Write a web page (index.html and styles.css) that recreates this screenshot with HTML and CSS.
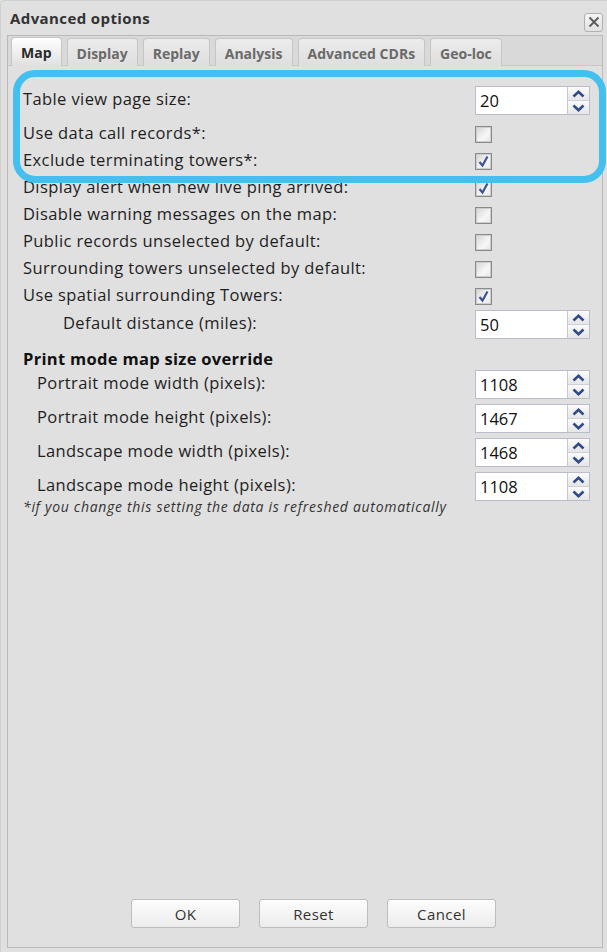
FILE: index.html
```html
<!DOCTYPE html>
<html lang="en">
<head>
<meta charset="utf-8">
<title>Advanced options</title>
<link rel="stylesheet" href="styles.css">
</head>
<body>
<div class="window">
  <div class="titlebar">
    <span class="title">Advanced options</span>
    <span class="close" aria-label="Close">
      <svg width="12" height="12" viewBox="0 0 12 12"><path d="M1.5 1.5 L10.5 10.5 M10.5 1.5 L1.5 10.5" stroke="#5a5a5a" stroke-width="1.8" fill="none"/></svg>
    </span>
  </div>
  <div class="panel">
    <div class="tabbar">
      <span class="tab active">Map</span>
      <span class="tab">Display</span>
      <span class="tab">Replay</span>
      <span class="tab">Analysis</span>
      <span class="tab">Advanced CDRs</span>
      <span class="tab">Geo-loc</span>
    </div>
    <div class="content">
      <div class="form">
        <div class="row spin-row first">
          <span class="label">Table view page size:</span>
          <span class="spinner"><span class="value">20</span><span class="arrows"><span class="arrow"><svg width="13" height="8" viewBox="0 0 13 8"><path d="M1.5 6.5 L6.5 1.8 L11.5 6.5" stroke="#2f4b8a" stroke-width="2.6" fill="none"/></svg></span><span class="arrow"><svg width="13" height="8" viewBox="0 0 13 8"><path d="M1.5 1.5 L6.5 6.2 L11.5 1.5" stroke="#2f4b8a" stroke-width="2.6" fill="none"/></svg></span></span></span>
        </div>
        <div class="row check-row">
          <span class="label">Use data call records*:</span>
          <span class="checkbox"></span>
        </div>
        <div class="row check-row">
          <span class="label">Exclude terminating towers*:</span>
          <span class="checkbox checked"><svg width="13" height="13" viewBox="0 0 13 13"><path d="M2.5 7 L5.5 10.5 L10.5 1.5" stroke="#3d5596" stroke-width="2.2" fill="none"/></svg></span>
        </div>
        <div class="row check-row">
          <span class="label">Display alert when new live ping arrived:</span>
          <span class="checkbox checked"><svg width="13" height="13" viewBox="0 0 13 13"><path d="M2.5 7 L5.5 10.5 L10.5 1.5" stroke="#3d5596" stroke-width="2.2" fill="none"/></svg></span>
        </div>
        <div class="row check-row">
          <span class="label">Disable warning messages on the map:</span>
          <span class="checkbox"></span>
        </div>
        <div class="row check-row">
          <span class="label">Public records unselected by default:</span>
          <span class="checkbox"></span>
        </div>
        <div class="row check-row">
          <span class="label">Surrounding towers unselected by default:</span>
          <span class="checkbox"></span>
        </div>
        <div class="row check-row">
          <span class="label">Use spatial surrounding Towers:</span>
          <span class="checkbox checked"><svg width="13" height="13" viewBox="0 0 13 13"><path d="M2.5 7 L5.5 10.5 L10.5 1.5" stroke="#3d5596" stroke-width="2.2" fill="none"/></svg></span>
        </div>
        <div class="row spin-row">
          <span class="label indent-2">Default distance (miles):</span>
          <span class="spinner"><span class="value">50</span><span class="arrows"><span class="arrow"><svg width="13" height="8" viewBox="0 0 13 8"><path d="M1.5 6.5 L6.5 1.8 L11.5 6.5" stroke="#2f4b8a" stroke-width="2.6" fill="none"/></svg></span><span class="arrow"><svg width="13" height="8" viewBox="0 0 13 8"><path d="M1.5 1.5 L6.5 6.2 L11.5 1.5" stroke="#2f4b8a" stroke-width="2.6" fill="none"/></svg></span></span></span>
        </div>
        <div class="section-title">Print mode map size override</div>
        <div class="row spin-row tight">
          <span class="label indent-1">Portrait mode width (pixels):</span>
          <span class="spinner"><span class="value">1108</span><span class="arrows"><span class="arrow"><svg width="13" height="8" viewBox="0 0 13 8"><path d="M1.5 6.5 L6.5 1.8 L11.5 6.5" stroke="#2f4b8a" stroke-width="2.6" fill="none"/></svg></span><span class="arrow"><svg width="13" height="8" viewBox="0 0 13 8"><path d="M1.5 1.5 L6.5 6.2 L11.5 1.5" stroke="#2f4b8a" stroke-width="2.6" fill="none"/></svg></span></span></span>
        </div>
        <div class="row spin-row tight">
          <span class="label indent-1">Portrait mode height (pixels):</span>
          <span class="spinner"><span class="value">1467</span><span class="arrows"><span class="arrow"><svg width="13" height="8" viewBox="0 0 13 8"><path d="M1.5 6.5 L6.5 1.8 L11.5 6.5" stroke="#2f4b8a" stroke-width="2.6" fill="none"/></svg></span><span class="arrow"><svg width="13" height="8" viewBox="0 0 13 8"><path d="M1.5 1.5 L6.5 6.2 L11.5 1.5" stroke="#2f4b8a" stroke-width="2.6" fill="none"/></svg></span></span></span>
        </div>
        <div class="row spin-row tight">
          <span class="label indent-1">Landscape mode width (pixels):</span>
          <span class="spinner"><span class="value">1468</span><span class="arrows"><span class="arrow"><svg width="13" height="8" viewBox="0 0 13 8"><path d="M1.5 6.5 L6.5 1.8 L11.5 6.5" stroke="#2f4b8a" stroke-width="2.6" fill="none"/></svg></span><span class="arrow"><svg width="13" height="8" viewBox="0 0 13 8"><path d="M1.5 1.5 L6.5 6.2 L11.5 1.5" stroke="#2f4b8a" stroke-width="2.6" fill="none"/></svg></span></span></span>
        </div>
        <div class="row spin-row tight">
          <span class="label indent-1">Landscape mode height (pixels):</span>
          <span class="spinner"><span class="value">1108</span><span class="arrows"><span class="arrow"><svg width="13" height="8" viewBox="0 0 13 8"><path d="M1.5 6.5 L6.5 1.8 L11.5 6.5" stroke="#2f4b8a" stroke-width="2.6" fill="none"/></svg></span><span class="arrow"><svg width="13" height="8" viewBox="0 0 13 8"><path d="M1.5 1.5 L6.5 6.2 L11.5 1.5" stroke="#2f4b8a" stroke-width="2.6" fill="none"/></svg></span></span></span>
        </div>
        <div class="footnote">*if you change this setting the data is refreshed automatically</div>
      </div>
      <div class="buttons">
        <span class="btn">OK</span>
        <span class="btn">Reset</span>
        <span class="btn">Cancel</span>
      </div>
    </div>
  </div>
  <div class="highlight"></div>
</div>
</body>
</html>
```
FILE: styles.css
```css
* { box-sizing: border-box; }
html, body { margin: 0; padding: 0; }
body {
  background: #e0e0e0;
  font-family: "Open Sans", "DejaVu Sans", sans-serif;
  color: #1e1e1e;
}
.window {
  position: relative;
  width: 607px;
  height: 952px;
  display: flex;
  flex-direction: column;
  background: #e0e0e0;
  border-left: 1px solid #cfcfcf;
  border-top: 1px solid #cfcfcf;
  border-radius: 5px 0 0 0;
}
.titlebar {
  height: 34px;
  display: flex;
  align-items: center;
  justify-content: space-between;
  padding: 0 4px 0 9px;
}
.title {
  font-weight: 700;
  font-size: 15px;
  letter-spacing: 0.4px;
  color: #333;
}
.close {
  width: 19px;
  height: 19px;
  margin-top: 8px;
  border: 1px solid #b0b0b0;
  border-radius: 3px;
  background: linear-gradient(#f4f4f4, #e2e2e2);
  display: flex;
  align-items: center;
  justify-content: center;
}
.panel {
  flex: 1;
  margin: 0 4px 4px 6px;
  border: 1px solid #bfb8b8;
  display: flex;
  flex-direction: column;
}
.tabbar {
  height: 30px;
  display: flex;
  align-items: flex-end;
  gap: 5px;
  padding: 0 3px;
  background: #d9d9d9;
  border-bottom: 1px solid #c8c8c8;
}
.tab {
  height: 28px;
  margin-bottom: -1px;
  padding: 1px 9px 0;
  display: flex;
  align-items: center;
  font-weight: 700;
  font-size: 14px;
  color: #6a6a6a;
  border: 1px solid #c6c6c6;
  border-bottom: none;
  border-radius: 4px 4px 0 0;
  background: linear-gradient(#ececec, #dedede);
}
.tab.active {
  color: #2a2a2a;
  background: linear-gradient(#ffffff, #e0e0e0);
  height: 29px;
}
.content {
  flex: 1;
  display: flex;
  flex-direction: column;
  padding: 20px 12px 19px 15px;
}
.form {
  display: flex;
  flex-direction: column;
}
.row {
  display: flex;
  align-items: center;
  justify-content: space-between;
  font-size: 16.5px;
  letter-spacing: 0.4px;
}
.check-row { height: 27px; }
.spin-row { height: 29px; }
.spin-row.first { margin-bottom: 6px; }
.spin-row.tight { margin-bottom: 5px; }
.indent-1 { padding-left: 14px; }
.indent-2 { padding-left: 40px; }
.label {
  white-space: nowrap;
  padding-bottom: 4px;
}
.checkbox {
  width: 17px;
  height: 17px;
  margin-right: 98px;
  border: 1px solid #8a8a8a;
  background: linear-gradient(135deg, #d4d4d4, #f7f7f7 60%, #e6e6e6);
  box-shadow: inset 0 0 0 1px #cdcdcd;
  display: flex;
  align-items: center;
  justify-content: center;
}
.spinner {
  width: 115px;
  height: 29px;
  display: flex;
  border: 1px solid #b9bccb;
  background: #fff;
  letter-spacing: 0;
}
.value {
  flex: 1;
  padding-left: 4px;
  display: flex;
  align-items: center;
  font-size: 16.5px;
  color: #111;
}
.arrows {
  width: 22px;
  display: flex;
  flex-direction: column;
  border-left: 1px solid #c6c8d4;
}
.arrow {
  flex: 1;
  display: flex;
  align-items: center;
  justify-content: center;
  background: linear-gradient(#fbfbfb, #e6e6e6);
}
.arrow + .arrow { border-top: 1px solid #cfd1da; }
.section-title {
  margin-top: 11px;
  height: 20px;
  line-height: 18px;
  font-weight: 700;
  font-size: 16.5px;
  letter-spacing: 0.3px;
  color: #111;
}
.footnote {
  margin-top: -7px;
  font-style: italic;
  font-size: 14px;
  letter-spacing: 0.7px;
  line-height: 15px;
  color: #333;
}
.buttons {
  margin-top: auto;
  display: flex;
  justify-content: center;
  gap: 19px;
  padding-left: 14px;
}
.btn {
  width: 109px;
  height: 29px;
  display: flex;
  align-items: center;
  justify-content: center;
  font-size: 15px;
  letter-spacing: 0.4px;
  color: #333;
  border: 1px solid #bdbdbd;
  border-radius: 3px;
  background: linear-gradient(#fdfdfd, #ececec);
}
.highlight {
  position: absolute;
  left: 12px;
  top: 69px;
  width: 593px;
  height: 113px;
  border: 7px solid #43c0ee;
  border-radius: 22px;
  pointer-events: none;
}
```
